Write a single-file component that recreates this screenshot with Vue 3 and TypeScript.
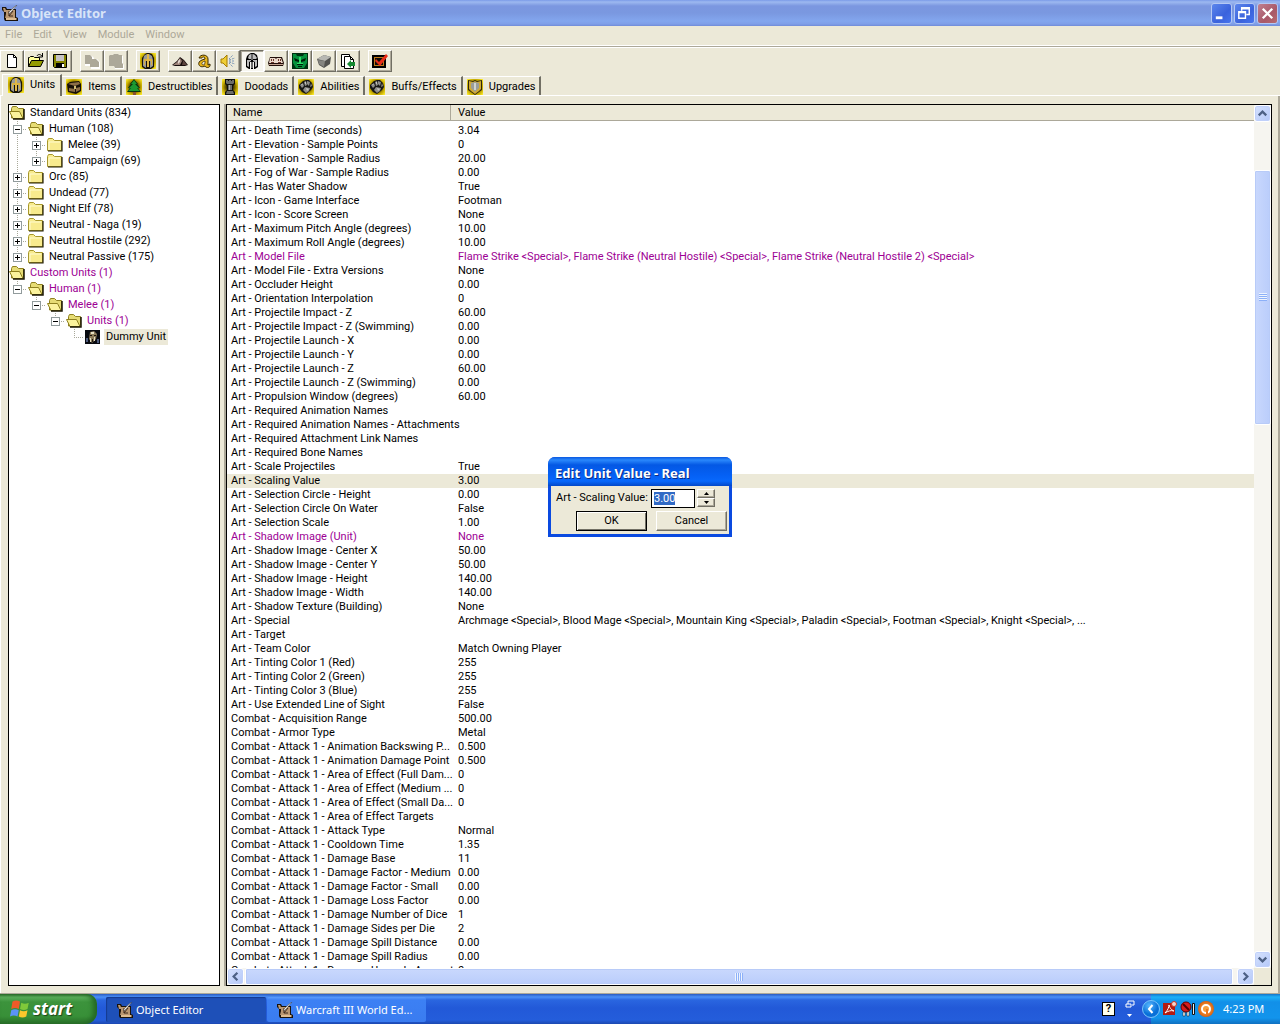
<script setup lang="ts">
import { onMounted, ref } from 'vue'

interface TreeNode {
  label: string
  guides: string[]
  icon: 'open' | 'closed' | 'portrait'
  custom?: boolean
  selected?: boolean
}
interface FieldRow {
  name: string
  value: string
  custom?: boolean
  selected?: boolean
}

const menus = ['File', 'Edit', 'View', 'Module', 'Window']

const toolGroups = [
  [
    { id: 'new', label: 'New' },
    { id: 'folder', label: 'Open' },
    { id: 'save', label: 'Save' },
  ],
  [
    { id: 'copy', label: 'Copy' },
    { id: 'paste', label: 'Paste' },
  ],
  [{ id: 'helm', label: 'New custom unit' }],
  [
    { id: 'terrain', label: 'Terrain Editor' },
    { id: 'trigger', label: 'Trigger Editor' },
    { id: 'sound', label: 'Sound Editor' },
    { id: 'object', label: 'Object Editor', pressed: true },
    { id: 'campaign', label: 'Campaign Editor' },
    { id: 'ai', label: 'AI Editor' },
    { id: 'manager', label: 'Object Manager' },
    { id: 'import', label: 'Import Manager' },
  ],
  [{ id: 'test', label: 'Test Map' }],
]

const tabs = [
  { id: 'helm', label: 'Units' },
  { id: 'chest', label: 'Items' },
  { id: 'tree', label: 'Destructibles' },
  { id: 'rook', label: 'Doodads' },
  { id: 'fist', label: 'Abilities' },
  { id: 'fist', label: 'Buffs/Effects' },
  { id: 'shield', label: 'Upgrades' },
]

/* Guide codes: v = line, t = branch, l = last branch, a leading + or - adds a box */
const nodes: TreeNode[] = [
  { label: 'Standard Units (834)', guides: [], icon: 'open' },
  { label: 'Human (108)', guides: ['-t'], icon: 'open' },
  { label: 'Melee (39)', guides: ['v', '+t'], icon: 'closed' },
  { label: 'Campaign (69)', guides: ['v', '+l'], icon: 'closed' },
  { label: 'Orc (85)', guides: ['+t'], icon: 'closed' },
  { label: 'Undead (77)', guides: ['+t'], icon: 'closed' },
  { label: 'Night Elf (78)', guides: ['+t'], icon: 'closed' },
  { label: 'Neutral - Naga (19)', guides: ['+t'], icon: 'closed' },
  { label: 'Neutral Hostile (292)', guides: ['+t'], icon: 'closed' },
  { label: 'Neutral Passive (175)', guides: ['+l'], icon: 'closed' },
  { label: 'Custom Units (1)', guides: [], icon: 'open', custom: true },
  { label: 'Human (1)', guides: ['-l'], icon: 'open', custom: true },
  { label: 'Melee (1)', guides: ['', '-l'], icon: 'open', custom: true },
  { label: 'Units (1)', guides: ['', '', '-l'], icon: 'open', custom: true },
  { label: 'Dummy Unit', guides: ['', '', '', 'l'], icon: 'portrait', selected: true },
]

const rows: FieldRow[] = [
  { name: 'Art - Death Time (seconds)', value: '3.04' },
  { name: 'Art - Elevation - Sample Points', value: '0' },
  { name: 'Art - Elevation - Sample Radius', value: '20.00' },
  { name: 'Art - Fog of War - Sample Radius', value: '0.00' },
  { name: 'Art - Has Water Shadow', value: 'True' },
  { name: 'Art - Icon - Game Interface', value: 'Footman' },
  { name: 'Art - Icon - Score Screen', value: 'None' },
  { name: 'Art - Maximum Pitch Angle (degrees)', value: '10.00' },
  { name: 'Art - Maximum Roll Angle (degrees)', value: '10.00' },
  {
    name: 'Art - Model File',
    value: 'Flame Strike <Special>, Flame Strike (Neutral Hostile) <Special>, Flame Strike (Neutral Hostile 2) <Special>',
    custom: true,
  },
  { name: 'Art - Model File - Extra Versions', value: 'None' },
  { name: 'Art - Occluder Height', value: '0.00' },
  { name: 'Art - Orientation Interpolation', value: '0' },
  { name: 'Art - Projectile Impact - Z', value: '60.00' },
  { name: 'Art - Projectile Impact - Z (Swimming)', value: '0.00' },
  { name: 'Art - Projectile Launch - X', value: '0.00' },
  { name: 'Art - Projectile Launch - Y', value: '0.00' },
  { name: 'Art - Projectile Launch - Z', value: '60.00' },
  { name: 'Art - Projectile Launch - Z (Swimming)', value: '0.00' },
  { name: 'Art - Propulsion Window (degrees)', value: '60.00' },
  { name: 'Art - Required Animation Names', value: '' },
  { name: 'Art - Required Animation Names - Attachments', value: '' },
  { name: 'Art - Required Attachment Link Names', value: '' },
  { name: 'Art - Required Bone Names', value: '' },
  { name: 'Art - Scale Projectiles', value: 'True' },
  { name: 'Art - Scaling Value', value: '3.00', selected: true },
  { name: 'Art - Selection Circle - Height', value: '0.00' },
  { name: 'Art - Selection Circle On Water', value: 'False' },
  { name: 'Art - Selection Scale', value: '1.00' },
  { name: 'Art - Shadow Image (Unit)', value: 'None', custom: true },
  { name: 'Art - Shadow Image - Center X', value: '50.00' },
  { name: 'Art - Shadow Image - Center Y', value: '50.00' },
  { name: 'Art - Shadow Image - Height', value: '140.00' },
  { name: 'Art - Shadow Image - Width', value: '140.00' },
  { name: 'Art - Shadow Texture (Building)', value: 'None' },
  {
    name: 'Art - Special',
    value: 'Archmage <Special>, Blood Mage <Special>, Mountain King <Special>, Paladin <Special>, Footman <Special>, Knight <Special>, ...',
  },
  { name: 'Art - Target', value: '' },
  { name: 'Art - Team Color', value: 'Match Owning Player' },
  { name: 'Art - Tinting Color 1 (Red)', value: '255' },
  { name: 'Art - Tinting Color 2 (Green)', value: '255' },
  { name: 'Art - Tinting Color 3 (Blue)', value: '255' },
  { name: 'Art - Use Extended Line of Sight', value: 'False' },
  { name: 'Combat - Acquisition Range', value: '500.00' },
  { name: 'Combat - Armor Type', value: 'Metal' },
  { name: 'Combat - Attack 1 - Animation Backswing P...', value: '0.500' },
  { name: 'Combat - Attack 1 - Animation Damage Point', value: '0.500' },
  { name: 'Combat - Attack 1 - Area of Effect (Full Dam...', value: '0' },
  { name: 'Combat - Attack 1 - Area of Effect (Medium ...', value: '0' },
  { name: 'Combat - Attack 1 - Area of Effect (Small Da...', value: '0' },
  { name: 'Combat - Attack 1 - Area of Effect Targets', value: '' },
  { name: 'Combat - Attack 1 - Attack Type', value: 'Normal' },
  { name: 'Combat - Attack 1 - Cooldown Time', value: '1.35' },
  { name: 'Combat - Attack 1 - Damage Base', value: '11' },
  { name: 'Combat - Attack 1 - Damage Factor - Medium', value: '0.00' },
  { name: 'Combat - Attack 1 - Damage Factor - Small', value: '0.00' },
  { name: 'Combat - Attack 1 - Damage Loss Factor', value: '0.00' },
  { name: 'Combat - Attack 1 - Damage Number of Dice', value: '1' },
  { name: 'Combat - Attack 1 - Damage Sides per Die', value: '2' },
  { name: 'Combat - Attack 1 - Damage Spill Distance', value: '0.00' },
  { name: 'Combat - Attack 1 - Damage Spill Radius', value: '0.00' },
  { name: 'Combat - Attack 1 - Damage Upgrade Amount', value: '0' },
]

const scaling = ref('3.00')
const field = ref<HTMLInputElement | null>(null)
onMounted(() => {
  field.value?.focus()
  field.value?.select()
})
</script>

<template>
  <div class="desktop">
    <svg class="sprites" aria-hidden="true">
      <defs>
        <radialGradient id="glow" r="0.68">
          <stop offset="0.3" stop-color="#3c3000" />
          <stop offset="0.65" stop-color="#c0a400" />
          <stop offset="1" stop-color="#fff030" />
        </radialGradient>
        <radialGradient id="amber"><stop offset="0.3" stop-color="#f7a040" /><stop offset="1" stop-color="#d86010" /></radialGradient>
        <radialGradient id="orb" cx="0.4" cy="0.3"><stop offset="0" stop-color="#58b8ff" /><stop offset="1" stop-color="#0870d8" /></radialGradient>
        <symbol id="i-app" viewBox="0 0 16 16">
          <path d="M0 2h4l1 2h9v8l2 1v3H3l-1-2V7L0 5z" fill="#1a120a" />
          <path d="M1 3h2l1 2v2H2zM4 5h9v8H3l1-4z" fill="#b99670" />
          <path d="M4 13h10l1 1-1 1H4z" fill="#dcbc92" />
          <path d="M7 11l4-5M7 6v5h4" stroke="#3c281a" fill="none" />
          <path d="M15 0L9 7 7 9V7l5-5z" fill="#f4f4f4" stroke="#444" stroke-width=".5" />
        </symbol>
        <symbol id="i-new" viewBox="0 0 16 16">
          <path d="M3.500 1.500h6l3 3v10h-9z" fill="#fff" stroke="#000" /><path d="M9.500 1.500v3h3" fill="none" stroke="#000" />
        </symbol>
        <symbol id="i-folder" viewBox="0 0 16 16">
          <path d="M.5 13.500v-9h1l1-1h3l1 1h5v3" fill="#ffff9c" stroke="#000" /><path d="M.5 13.500l3-6h12l-3 6z" fill="#949c00" stroke="#000" />
          <path d="M9 3c1-2 3-2 5 0M14.500 0v4h-4" fill="none" stroke="#000" />
        </symbol>
        <symbol id="i-save" viewBox="0 0 16 16">
          <path d="M1.500 1.500h13v13h-12l-1-1z" fill="#848400" stroke="#000" /><path d="M4 2h8v6H4z" fill="#c6c3c6" /><path d="M4 10h8v4H4z" fill="#000" /><path d="M10 11h2v3h-2z" fill="#fff" />
        </symbol>
        <symbol id="i-copy" viewBox="0 0 16 16">
          <path d="M2 3h6l2 2v1h3l3 3v7H7v-3H1V3z" fill="#fff" /><path d="M1 2h5l2 2v2h4l3 3v5H6v-3H1z" fill="#aca899" />
        </symbol>
        <symbol id="i-paste" viewBox="0 0 16 16">
          <path d="M2 3h13v8l1 1v4H7l-1-3H2z" fill="#fff" /><path d="M1 3l1-1h3l1-1h4l1 1h3v8l1 1v4H7l-1-2H1z" fill="#aca899" />
        </symbol>
        <symbol id="i-object" viewBox="0 0 16 16">
          <path d="M5 1l2-1h3l3 2 1 4v8l-3 2h-1V9H9v7H7V9H6v7H5l-3-2V6l1-3z" fill="#000" />
          <path d="M5 2l2-1v5H5L4 5zM9 1l2 1 2 3-1 1H9zM3 7h4v1L5 9v5l-2-1zM9 7h4v6l-2 1V9L9 8z" fill="#bdbdbd" />
          <path d="M7 1h2v6H7zM7 9h2v6H7z" fill="#6a6a6a" />
        </symbol>
        <symbol id="i-helm" viewBox="0 0 16 16">
          <path d="M0 0h16v16H0z" fill="url(#glow)" />
          <path d="M5 1l2-1h2l3 1 2 4v9l-3 2H5l-3-2V5z" fill="#16130a" />
          <path d="M5 2l2-1h2l3 2 1 4v6l-3 2V8H6v7l-3-2V7l1-4z" fill="#9a9a96" />
          <path d="M7 1h2v13H7z" fill="#e0b848" /><path d="M4 6h3v2H5v4H4zM9 6h3v6h-1V8H9z" fill="#d8b040" /><path d="M6 8h1v6H6zM9 8h1v6H9z" fill="#141008" />
        </symbol>
        <symbol id="i-terrain" viewBox="0 0 16 16">
          <path d="M0 12l5-4 3-4 4 3 4 5-3 1H3z" fill="#160d0b" /><path d="M1 12l4-3 3-4 2 3-2 4z" fill="#9c8278" /><path d="M8 5l3 3-1 4h5l-3-4z" fill="#5b433d" /><path d="M6 8l2-2v3l-2 2" fill="#e0d3cb" />
        </symbol>
        <symbol id="i-trigger" viewBox="0 0 16 16">
          <path d="M3 5c1-4 9-4 9 1v6l2-1v2c-1 2-4 2-5 0-6 3-9-4-3-6l3-1c0-3-3-2-3-1z" fill="#e7b51c" stroke="#3b2a00" /><path d="M9 8c-4 1-4 4-1 4l1-2z" fill="#ece9d8" stroke="#3b2a00" stroke-width=".7" />
        </symbol>
        <symbol id="i-sound" viewBox="0 0 16 16">
          <path d="M1 6h2l4-4v12l-4-4H1z" fill="#f0ce35" stroke="#a57d00" /><path d="M9 6l4-4M9 8h6M9 10l4 4M9 7l6-2M9 9l6 2" stroke="#7c98b8" stroke-dasharray="2 1" />
        </symbol>
        <symbol id="i-campaign" viewBox="0 0 16 16">
          <path d="M2 4h12l2 6-1 3H1l-1-3z" fill="#210d09" /><path d="M2 5h5l1 1 1-1h4l2 5H1z" fill="#ead8ca" /><path d="M3 6h1v2H3zM5 6h1v2H5zM10 6h1v2h-1zM12 6h1v2h-1zM3 9h3v1H3zM10 9h3v1h-3z" fill="#6b3429" /><path d="M1 11h14v1H1z" fill="#c2a08e" />
        </symbol>
        <symbol id="i-ai" viewBox="0 0 16 16">
          <path d="M0 0h16v16H0z" fill="#003010" /><path d="M1 1h3l1 2h6l1-2h3v9l-3 5H4l-3-5z" fill="#07903c" /><path d="M2 5l5 2v2L3 8zM14 5L9 7v2l4-1zM5 11h6v1H5zM6 13h4v1H6z" fill="#001b08" /><path d="M7 4h2v6H7zM5 10h6v1H5z" fill="#31dc68" />
        </symbol>
        <symbol id="i-manager" viewBox="0 0 16 16">
          <path d="M1 6l7-4 7 2-1 7-6 4-5-3z" fill="#52524f" /><path d="M1 6l7-4 7 2-6 4z" fill="#b7b7b2" /><path d="M2 7l7 1-1 6-5-3z" fill="#858580" />
        </symbol>
        <symbol id="i-import" viewBox="0 0 16 16">
          <path d="M1.500 1.500h8v12h-8z" fill="#fff" stroke="#000" /><path d="M4.500 3.500h6l3 3v9h-9z" fill="#fff" stroke="#000" /><path d="M10.500 3.500v3h3" fill="none" stroke="#000" /><path d="M7 11l4-4v2h4v4h-4v2z" fill="#168a32" />
        </symbol>
        <symbol id="i-test" viewBox="0 0 16 16">
          <path d="M1 3h12v11H1z" fill="#c07818" stroke="#000" stroke-width="2" /><path d="M3 5h8v7H3z" fill="#100d08" /><path d="M4 6l3 3 7-8 2 2-8 10-5-5z" fill="#e82c18" />
        </symbol>
        <symbol id="i-chest" viewBox="0 0 16 16">
          <path d="M0 0h16v16H0z" fill="url(#glow)" /><path d="M1 5l3-2 9-1 2 3v7l-5 3-8-2z" fill="#160f08" /><path d="M2 5l3-1 8-1 1 2-5 2zM3 9l6 1v3l-6-1zM10 9l4-1v3l-4 2z" fill="#8c6e48" /><path d="M8 7h2v3H8z" fill="#d2bd75" />
        </symbol>
        <symbol id="i-tree" viewBox="0 0 16 16">
          <path d="M0 0h16v16H0z" fill="url(#glow)" /><path d="M8 0l4 5h-1l3 4h-2l3 4H1l3-4H2l3-4H4z" fill="#07330c" /><path d="M8 1l3 4H9l4 4h-2l3 3H2l3-3H3l4-4H5z" fill="#1b9831" /><path d="M7 13h3v3H7z" fill="#87522c" />
        </symbol>
        <symbol id="i-rook" viewBox="0 0 16 16">
          <path d="M0 0h16v16H0z" fill="url(#glow)" /><path d="M3 0h10v5l-2 2v4l2 2v3H3v-3l2-2V7L3 5z" fill="#11110e" /><path d="M4 1h2v1h1V1h2v1h1V1h2v3l-1 1H5L4 4zM6 6h4v5H6zM5 12h6l1 3H4z" fill="#6c6c69" /><path d="M7 6h1v5H7z" fill="#b0b0a9" />
        </symbol>
        <symbol id="i-fist" viewBox="0 0 16 16">
          <path d="M0 0h16v16H0z" fill="url(#glow)" /><path d="M1 6l4-4 3-1h3l3 3 1 4-2 3-5 4-4-2-3-4z" fill="#171715" /><path d="M2 6l3-2 1 3-2 2zM6 3l2-1 1 4-2 1zM9 2l3 1-1 4-2-2zM13 4l1 3-2 1zM7 8l5 1-1 3-3 2-3-3z" fill="#8e8e8b" /><path d="M8 9l3 1-2 2zM3 6l1-1 1 1zM7 3h1v2H7z" fill="#c6c6c2" />
        </symbol>
        <symbol id="i-shield" viewBox="0 0 16 16">
          <path d="M0 0h16v16H0z" fill="url(#glow)" /><path d="M1 1l5 1 2-1 2 1 5-1v10l-3 2-4 3-4-3-3-2z" fill="#2e270c" /><path d="M2 2l4 1 2-1 2 1 4-1v8l-2 2-4 3-4-3-2-2z" fill="#d0aa35" /><path d="M4 4l4-1 4 1v5l-4 4-4-4z" fill="#9b9d9a" /><path d="M7 4h2v7H7z" fill="#d0d3d0" />
        </symbol>
        <symbol id="i-open" viewBox="0 0 16 16">
          <path d="M2.500 13V3.500l1-2h4l2 2h5v9z" fill="#e6dc74" stroke="#8f8120" /><path d="M.5 6.500h10l3.500 7H4z" fill="#fbf39c" stroke="#8f8120" /><path d="M15 4v10H4" fill="none" stroke="#191500" stroke-width="1.500" />
        </symbol>
        <symbol id="i-closed" viewBox="0 0 16 16">
          <path d="M.5 13.500v-10l1-2h4l2 2h7v10z" fill="#f8eb8e" stroke="#a8982b" /><path d="M1 14h14V4" fill="none" stroke="#201c05" stroke-width="1.200" /><path d="M2 5h11M2 5v8" stroke="#fffbd0" fill="none" />
        </symbol>
        <symbol id="i-portrait" viewBox="0 0 16 16">
          <path d="M0 1h15v14H0z" fill="#080a10" /><path d="M5 3l4-1 3 3-1 5-4 4-3-4z" fill="#8c7c5a" /><path d="M6 3h3v2H6zM5 9h1v4H5zM9 8h1v4H9z" fill="#e4dfc4" /><path d="M5 6h2v1H5zM9 6h2v1H9zM7 10h1v3H7z" fill="#1a140c" /><path d="M1 9h2v4H1zM12 10h2v4h-2z" fill="#4e5b7d" />
        </symbol>
        <symbol id="i-flag" viewBox="1 1 16 16">
          <path d="M3 3c2-1 4-1 6 0L8 9c-2-1-4-1-6 0z" fill="#f05a28" /><path d="M10 4c2 1 4 1 6 0l-1 5c-2 1-4 1-6 0z" fill="#7fc93a" /><path d="M2 10c2-1 4-1 6 0l-1 5c-2-1-4-1-6 0z" fill="#5b93f8" /><path d="M9 10c2 1 4 1 6 0l-1 5c-2 1-4 1-6 0z" fill="#fbc72c" />
        </symbol>
      </defs>
    </svg>

    <main class="window">
      <header class="titlebar">
        <svg class="ico"><use href="#i-app" /></svg>
        <h1>Object Editor</h1>
        <div class="captions">
          <button class="cap" aria-label="Minimize"><svg viewBox="0 0 20 20"><path d="M4 13h7v3H4z" fill="#fff" /></svg></button>
          <button class="cap" aria-label="Restore"><svg viewBox="0 0 20 20"><path d="M7 7V4h8v7h-3M7 5h8M4 8h7v7H4zM4 9h7" fill="none" stroke="#fff" stroke-width="1.500" /></svg></button>
          <button class="cap close" aria-label="Close"><svg viewBox="0 0 20 20"><path d="M5 5l10 10M15 5L5 15" stroke="#fff" stroke-width="2.400" /></svg></button>
        </div>
      </header>

      <nav class="menubar">
        <button v-for="m in menus" :key="m" disabled>{{ m }}</button>
      </nav>

      <div class="toolbar">
        <div v-for="(group, g) in toolGroups" :key="g" class="group">
          <button v-for="t in group" :key="t.id" class="tool" :class="{ pressed: 'pressed' in t }" :aria-label="t.label">
            <svg class="ico"><use :href="'#i-' + t.id" /></svg>
          </button>
        </div>
      </div>

      <div class="tabs" role="tablist">
        <button v-for="(t, i) in tabs" :key="t.label" class="tab" :class="{ active: i === 0 }" role="tab" :aria-selected="i === 0">
          <svg class="ico"><use :href="'#i-' + t.id" /></svg>{{ t.label }}
        </button>
      </div>

      <section class="panes">
        <ul class="tree">
          <li v-for="(n, i) in nodes" :key="i" class="node" :class="{ custom: n.custom, selected: n.selected }">
            <span v-for="(g, k) in n.guides" :key="k" class="guide" :class="g.slice(-1)">
              <button v-if="g.length > 1" class="box" :class="{ plus: g[0] === '+' }" :aria-label="'Toggle ' + n.label"></button>
            </span>
            <svg class="ico"><use :href="'#i-' + n.icon" /></svg>
            <span class="label">{{ n.label }}</span>
          </li>
        </ul>

        <div class="list">
          <div class="grid">
            <table>
              <colgroup><col class="c-name" /><col /></colgroup>
              <thead>
                <tr><th>Name</th><th>Value</th></tr>
              </thead>
              <tbody>
                <tr v-for="r in rows" :key="r.name" :class="{ custom: r.custom, selected: r.selected }">
                  <td>{{ r.name }}</td>
                  <td>{{ r.value }}</td>
                </tr>
              </tbody>
            </table>
          </div>
          <div class="vbar">
            <button class="arrow" aria-label="Scroll up"><svg viewBox="0 0 16 16"><path d="M4 10l4-4 4 4" /></svg></button>
            <div class="before"></div>
            <div class="thumb"><i></i></div>
            <div class="after"></div>
            <button class="arrow" aria-label="Scroll down"><svg viewBox="0 0 16 16"><path d="M4 6l4 4 4-4" /></svg></button>
          </div>
          <div class="hbar">
            <button class="arrow" aria-label="Scroll left"><svg viewBox="0 0 16 16"><path d="M10 4L6 8l4 4" /></svg></button>
            <div class="thumb"><i></i></div>
            <button class="arrow" aria-label="Scroll right"><svg viewBox="0 0 16 16"><path d="M6 4l4 4-4 4" /></svg></button>
          </div>
          <div class="corner"></div>
        </div>
      </section>

      <form class="dialog" role="dialog" aria-labelledby="dlg-title" @submit.prevent>
        <h2 id="dlg-title">Edit Unit Value - Real</h2>
        <div class="body">
          <div class="line">
            <label for="scaling">Art - Scaling Value:</label>
            <input id="scaling" ref="field" v-model="scaling" type="text" />
            <span class="spin">
              <button type="button" aria-label="Increase"><svg viewBox="0 0 5 3"><path d="M0 3h5L2.500 0z" /></svg></button>
              <button type="button" aria-label="Decrease"><svg viewBox="0 0 5 3"><path d="M0 0h5L2.500 3z" /></svg></button>
            </span>
          </div>
          <div class="actions">
            <button class="push default" type="submit">OK</button>
            <button class="push" type="button">Cancel</button>
          </div>
        </div>
      </form>
    </main>

    <footer class="taskbar">
      <button class="start"><svg class="flag"><use href="#i-flag" /></svg>start</button>
      <button class="task current"><svg class="ico"><use href="#i-app" /></svg>Object Editor</button>
      <button class="task"><svg class="ico"><use href="#i-app" /></svg>Warcraft III World Ed...</button>
      <div class="lang">
        <span class="help">?</span>
        <svg viewBox="0 0 10 18"><path d="M3 4V1h6v4H7M1 4h5v3H1z" fill="none" stroke="#fff" /><path d="M2 14h5l-2.500 3z" fill="#fff" /></svg>
      </div>
      <div class="tray">
        <button class="expand" aria-label="Show hidden icons"><svg viewBox="0 0 18 18"><circle cx="9" cy="9" r="8.500" fill="url(#orb)" stroke="#7cc4fa" /><path d="M10.500 5L7 9l3.500 4" fill="none" stroke="#fff" stroke-width="2" /></svg></button>
        <svg class="ico" viewBox="0 0 16 16"><path d="M1 2h12v12H1z" fill="#b31b12" /><path d="M3 12c3-3 4-6 4-8 1 4 3 5 5 6-3-1-6 0-9 2z" fill="none" stroke="#fff" /><circle cx="12" cy="3" r="2.500" fill="#f3d8d0" stroke="#c32" /></svg>
        <svg class="ico" viewBox="0 0 16 16"><path d="M12.500 2.500h2v11h-2z" fill="#eee" stroke="#111" /><path d="M3 11h2v4H3zM7 10h2v5H7z" fill="#fff" stroke="#111" stroke-width=".5" /><circle cx="6" cy="6" r="5" fill="#d81c1c" stroke="#600" /><path d="M3 3l6 6" stroke="#500" stroke-width="2" /></svg>
        <svg class="ico" viewBox="0 0 16 16"><circle cx="8" cy="8" r="8" fill="url(#amber)" /><circle cx="8" cy="8" r="4" fill="none" stroke="#fff" stroke-width="2" /><path d="M8 8h2v5H8z" fill="#e87820" /></svg>
        <time>4:23 PM</time>
      </div>
    </footer>
  </div>
</template>

<style>
body {
  margin: 0;
}
</style>

<style scoped>
.desktop {
  display: flex;
  flex-direction: column;
  height: 100vh;
  overflow: hidden;
  background: #ece9d8;
  color: #000;
  font-family: Roboto, 'Liberation Sans', sans-serif;
  font-size: 11px;
  line-height: 14px;
}
.desktop *,
.desktop *::before {
  box-sizing: border-box;
}
button {
  margin: 0;
  padding: 0;
  border: 0;
  background: none;
  color: inherit;
  font: inherit;
}
svg {
  display: block;
  flex: none;
}
.sprites {
  position: absolute;
  width: 0;
  height: 0;
}
.ico {
  width: 16px;
  height: 16px;
}
.window {
  position: relative;
  display: flex;
  flex: 1;
  flex-direction: column;
  min-height: 0;
}

/* Title bar */
.titlebar {
  display: flex;
  align-items: center;
  height: 26px;
  padding: 0 2px;
  background: linear-gradient(#7b9be8, #9db9f0 2px, #7b97e0 6px, #7a98e0 13px, #83a6ee 21px, #7f9fe8 24px, #708bd8);
}
.titlebar h1 {
  margin: 0 auto 0 3px;
  color: #d8e4f8;
  font: bold 13px/16px 'Noto Sans', sans-serif;
}
.captions {
  display: flex;
  gap: 2px;
}
.cap {
  width: 21px;
  height: 21px;
  border: 1px solid #b4c8f4;
  border-radius: 3px;
  background: linear-gradient(135deg, #5c86ec, #3a62dc 60%, #4674ee);
}
.cap.close {
  background: linear-gradient(135deg, #c08090, #a85868 60%, #b86a70);
}

/* Menu and toolbar */
.menubar {
  display: flex;
  height: 20px;
  padding-bottom: 1px;
  border-bottom: 1px solid #fff;
}
.menubar button {
  padding: 0 6px 0 5px;
  color: #aca899;
}
.toolbar {
  display: flex;
  gap: 8px;
  padding: 3px 0 1px;
  border-top: 1px solid #aca899;
  box-shadow: inset 0 1px #fff;
}
.group {
  display: flex;
}
.tool {
  display: grid;
  place-items: center;
  width: 24px;
  height: 22px;
  border: 1px solid;
  border-color: #fff #716f64 #716f64 #fff;
  box-shadow: inset -1px -1px #aca899;
}
.tool.pressed {
  border-color: #716f64 #fff #fff #716f64;
  background: #f7f6f0;
  box-shadow: inset 1px 1px #aca899;
}

/* Tabs */
.tabs {
  display: flex;
  align-items: flex-end;
  height: 23px;
  padding-left: 2px;
  border-bottom: 1px solid #fff;
}
.tab {
  display: flex;
  align-items: center;
  gap: 6px;
  height: 19px;
  padding: 1px 4px 0;
  border: 1px solid;
  border-width: 1px 2px 0 0;
  border-color: #fff #716f64;
}
.tab.active {
  height: 22px;
  margin-bottom: -1px;
  padding: 0 5px 2px;
  border-left: 1px solid #fff;
  background: #ece9d8;
}

/* Panes */
.panes {
  display: flex;
  flex: 1;
  gap: 6px;
  min-height: 0;
  padding: 8px 6px 7px 8px;
  border: 1px solid #aca899;
  border-width: 0 2px 1px 0;
  box-shadow: inset 1px 0 #fff;
}
.tree {
  flex: none;
  width: 212px;
  margin: 0;
  padding: 0;
  overflow: hidden;
  border: 1px solid #000;
  background: #fff;
  list-style: none;
}
.node {
  display: flex;
  height: 16px;
  line-height: 16px;
  white-space: nowrap;
}
.node .label {
  padding: 0 2px;
  margin-left: 3px;
}
.custom {
  color: #9c0094;
}
.node.selected .label {
  background: #ece9d8;
}
.guide {
  position: relative;
  flex: none;
  width: 19px;
  background: repeating-linear-gradient(#a8a899 0 1px, transparent 1px 2px) 8px 0 / 1px 0 no-repeat;
}
.guide.v,
.guide.t {
  background-size: 1px 16px;
}
.guide.l {
  background-size: 1px 8px;
}
.guide.t::before,
.guide.l::before {
  content: '';
  position: absolute;
  top: 8px;
  left: 8px;
  width: 10px;
  height: 1px;
  background: repeating-linear-gradient(90deg, #a8a899 0 1px, transparent 1px 2px);
}
.box {
  position: absolute;
  top: 4px;
  left: 4px;
  width: 9px;
  height: 9px;
  border: 1px solid #919b9c;
  background: linear-gradient(#000, #000) center / 5px 1px no-repeat, #fff;
}
.box.plus {
  background: linear-gradient(#000, #000) center / 5px 1px no-repeat, linear-gradient(#000, #000) center / 1px 5px no-repeat, #fff;
}

.list {
  display: grid;
  flex: 1;
  grid-template: minmax(0, 1fr) 17px / minmax(0, 1fr) 17px;
  min-width: 0;
  border: 1px solid #000;
  background: #fff;
  box-shadow: -2px 0 #aca899;
}
.grid {
  overflow: hidden;
}
table {
  width: 100%;
  border-collapse: separate;
  border-spacing: 0;
  table-layout: fixed;
}
.c-name {
  width: 224px;
}
th {
  height: 16px;
  padding: 1px 7px 0;
  border-bottom: 1px solid #aca899;
  background: #ece9d8;
  font-weight: normal;
  text-align: left;
}
th:first-child {
  padding-left: 6px;
  border-right: 1px solid #aca899;
}
tbody::before {
  content: '';
  display: block;
  height: 3px;
}
td {
  height: 14px;
  padding: 0 0 0 7px;
  white-space: nowrap;
}
td:first-child {
  padding-left: 4px;
}
tr.selected td {
  background: #ece9d8;
}

/* Scroll bars */
.vbar,
.hbar {
  display: flex;
  background: #f6f5f0;
}
.vbar {
  flex-direction: column;
}
.arrow {
  flex: none;
  width: 17px;
  height: 17px;
  border: 1px solid #fff;
  border-radius: 3px;
  background: linear-gradient(135deg, #d6e2fe, #b4c8f8);
  box-shadow: inset 0 0 0 1px #c0d0fa;
}
.arrow path {
  fill: none;
  stroke: #4d6185;
  stroke-width: 2.4;
}
.thumb {
  display: grid;
  place-items: center;
  border: 1px solid #fff;
  border-radius: 2px;
  box-shadow: inset 0 0 0 1px #b8cbf8;
}
.before {
  flex: 48;
}
.vbar .thumb {
  flex: 254;
  background: linear-gradient(90deg, #c9d8fd, #bacdfb);
}
.after {
  flex: 528;
}
.hbar .thumb {
  flex: 1;
  margin: 0 4px 0 1px;
  background: linear-gradient(#c9d8fd, #bacdfb);
}
.thumb i {
  width: 8px;
  height: 8px;
  background: repeating-linear-gradient(#eef4fe 0 1px, #8cb0f8 1px 2px);
}
.hbar .thumb i {
  background: repeating-linear-gradient(90deg, #eef4fe 0 1px, #8cb0f8 1px 2px);
}
.corner {
  background: #ece9d8;
}

/* Value dialog */
.dialog {
  position: absolute;
  top: 50%;
  left: 50%;
  width: 184px;
  padding-bottom: 3px;
  border-radius: 7px 7px 0 0;
  background: #0a4ae0;
  transform: translate(-50%, -50%);
}
.dialog h2 {
  height: 29px;
  margin: 0;
  padding: 2px 7px 0;
  border-radius: 7px 7px 0 0;
  background: linear-gradient(#0a58e0, #2a88fc 3px, #0458e4 8px, #0560f4 18px, #0868fc 24px, #0348c8);
  color: #fff;
  font: bold 13px/28px 'Noto Sans', sans-serif;
  text-shadow: 1px 1px #0a2a80;
  white-space: nowrap;
}
.body {
  margin: 0 3px;
  padding: 2px 2px 3px 5px;
  background: #ece9d8;
}
.line {
  display: flex;
  align-items: center;
  height: 20px;
}
.line label {
  flex: none;
  width: 95px;
}
.line input {
  width: 44px;
  height: 19px;
  padding: 0 2px;
  border: 1px solid #000;
  border-radius: 0;
  outline: 0;
  background: #fff;
  font: inherit;
}
.line input::selection {
  background: #316ac5;
  color: #fff;
}
.spin {
  display: flex;
  flex-direction: column;
  margin-left: 2px;
}
.spin button,
.push {
  display: grid;
  place-items: center;
  border: 1px solid;
  border-color: #fff #716f64 #716f64 #fff;
  box-shadow: inset -1px -1px #aca899;
}
.spin button {
  width: 18px;
  height: 9px;
}
.spin svg {
  width: 5px;
  height: 3px;
}
.actions {
  display: flex;
  justify-content: flex-end;
  gap: 9px;
  margin-top: 3px;
}
.push {
  width: 71px;
  height: 20px;
}
.push.default {
  border-color: #000;
  box-shadow: inset 1px 1px #fff, inset -1px -1px #716f64;
}

/* Taskbar */
.taskbar {
  display: flex;
  align-items: stretch;
  flex: none;
  height: 30px;
  background: linear-gradient(#2a5cc0, #4a90f8 3px, #2a66e0 6px, #2259d8 14px, #245ddb 26px, #1c48b0);
  color: #fff;
}
.start {
  display: flex;
  align-items: center;
  gap: 3px;
  width: 97px;
  padding-left: 10px;
  border-radius: 0 10px 12px 0;
  background: linear-gradient(#2c6c2c, #5cb05c 3px, #3c933c 8px, #389038 22px, #2a702a);
  box-shadow: inset -4px 0 5px #246824;
  font: italic bold 17px/20px 'Open Sans', sans-serif;
  text-shadow: 1px 1px 1px #1c4418;
}
.flag {
  width: 20px;
  height: 20px;
}
.task {
  display: flex;
  align-items: center;
  gap: 3px;
  width: 159px;
  margin: 3px 0 2px 1px;
  padding: 0 10px;
  border-radius: 2px;
  background: linear-gradient(#5a9cfc, #3c80f4 3px, #3a7cf0);
  font: 11px/14px 'Noto Sans', sans-serif;
  white-space: nowrap;
}
.task.current {
  width: 160px;
  margin-left: 9px;
  padding-left: 11px;
  background: #1e50b8;
  box-shadow: inset 1px 1px 1px #143a90;
}
.lang {
  display: flex;
  align-items: center;
  gap: 10px;
  margin-left: auto;
}
.lang svg {
  width: 10px;
  height: 18px;
}
.help {
  width: 13px;
  height: 14px;
  border: 1px solid #000;
  background: #fffff0;
  color: #000;
  font-weight: bold;
  line-height: 12px;
  text-align: center;
}
.tray {
  display: flex;
  align-items: center;
  gap: 2px;
  width: 129px;
  margin-left: 16px;
  background: linear-gradient(#1474c8, #1cb0f8 3px, #1290e8 8px, #1294ec 24px, #1070c0);
  font: 11px/14px 'Noto Sans', sans-serif;
}
.expand {
  margin-left: -9px;
}
.expand svg {
  width: 18px;
  height: 18px;
}
.tray time {
  margin-left: 7px;
  white-space: nowrap;
}
</style>
